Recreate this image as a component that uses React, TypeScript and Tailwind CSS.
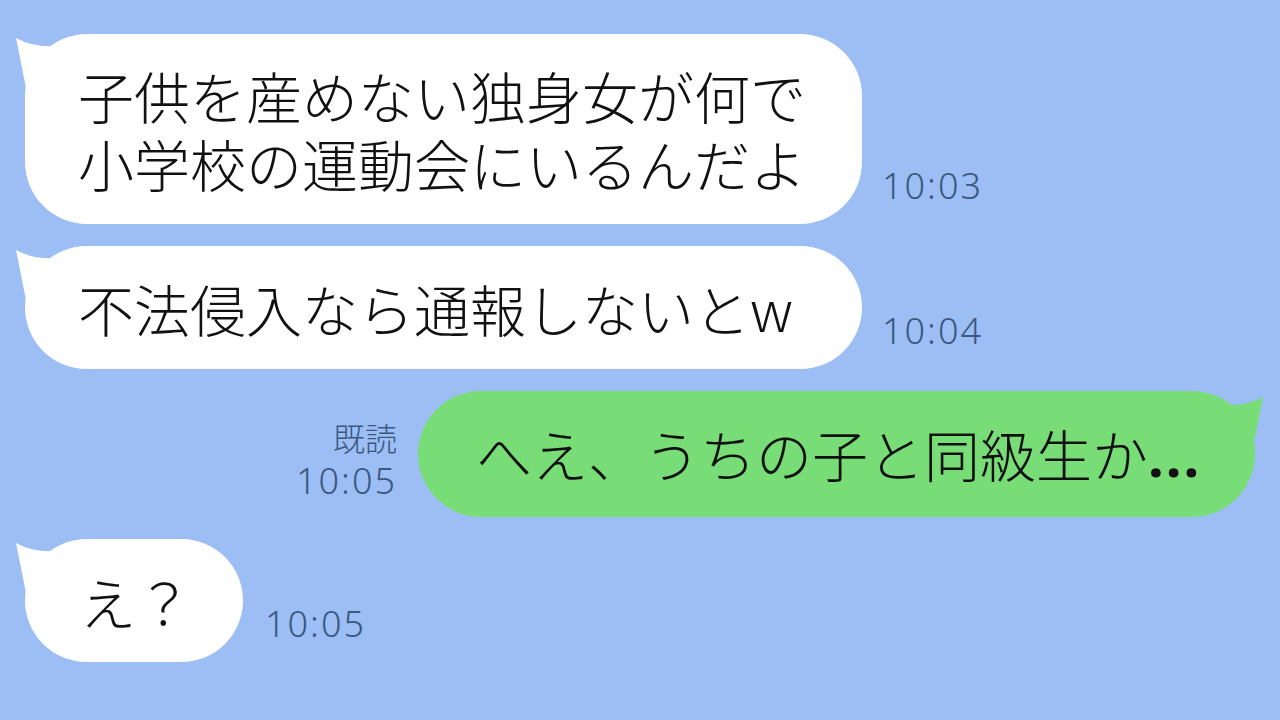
import React from "react";

const FONT = { fontFamily: '"Noto Sans CJK JP", "Noto Sans", sans-serif' };
const TIME_FONT = { fontFamily: '"Noto Sans", "Noto Sans CJK JP", sans-serif' };
const DOT_FONT = { fontFamily: '"Noto Sans", sans-serif' };

function LeftTail() {
  return (
    <svg
      className="absolute left-[-9px] top-[4px]"
      width="50"
      height="70"
      viewBox="0 0 50 70"
    >
      <path d="M0 0 Q18 10 42 8 L42 60 L12 60 Q6 30 0 0 Z" fill="#ffffff" />
    </svg>
  );
}

function RightTail() {
  return (
    <svg
      className="absolute right-[-8px] top-[6px]"
      width="50"
      height="70"
      viewBox="0 0 50 70"
    >
      <path d="M50 0 Q32 10 8 8 L8 60 L38 60 Q44 30 50 0 Z" fill="#79dd77" />
    </svg>
  );
}

function Time({ t }: { t: string }) {
  return (
    <div
      className="text-[36px] leading-[36px] tracking-[2px] font-light text-[#3b5880]"
      style={TIME_FONT}
    >
      {t}
    </div>
  );
}

export default function App() {
  return (
    <div
      className="w-[1280px] h-[720px] overflow-hidden bg-[#9cbef4] flex flex-col gap-[22px] pt-[34px] pl-[25px] pr-[25px] font-light"
      style={FONT}
    >
      <div className="flex items-end">
        <div className="relative w-[837px] h-[190px] bg-white rounded-[62px] pl-[53px] flex flex-col justify-center text-[56px] leading-[68px] text-[#111]">
          <LeftTail />
          <div className="relative">
            子供を産めない独身女が何で
            <br />
            小学校の運動会にいるんだよ
          </div>
        </div>
        <div className="ml-[20px] mb-[20px]">
          <Time t="10:03" />
        </div>
      </div>

      <div className="flex items-end">
        <div className="relative w-[837px] h-[123px] bg-white rounded-[62px] pl-[53px] flex items-center text-[56px] leading-[68px] text-[#111]">
          <LeftTail />
          <div className="relative">不法侵入なら通報しないとw</div>
        </div>
        <div className="ml-[20px] mb-[20px]">
          <Time t="10:04" />
        </div>
      </div>

      <div className="flex items-end justify-end">
        <div className="mr-[21px] mb-[18px] flex flex-col items-end gap-[8px]">
          <div className="text-[32px] leading-[36px] font-light text-[#3b5880]" style={FONT}>
            既読
          </div>
          <Time t="10:05" />
        </div>
        <div className="relative w-[837px] h-[126px] bg-[#79dd77] rounded-[63px] pl-[58px] flex items-center text-[56px] leading-[68px] text-[#111]">
          <RightTail />
          <div className="relative">
            へえ、うちの子と同級生か
            <span className="font-bold tracking-[2px]" style={DOT_FONT}>...</span>
          </div>
        </div>
      </div>

      <div className="flex items-end">
        <div className="relative h-[123px] bg-white rounded-[62px] pl-[55px] pr-[51px] flex items-center text-[56px] leading-[68px] text-[#111]">
          <LeftTail />
          <div className="relative">え？</div>
        </div>
        <div className="ml-[22px] mb-[20px]">
          <Time t="10:05" />
        </div>
      </div>
    </div>
  );
}
